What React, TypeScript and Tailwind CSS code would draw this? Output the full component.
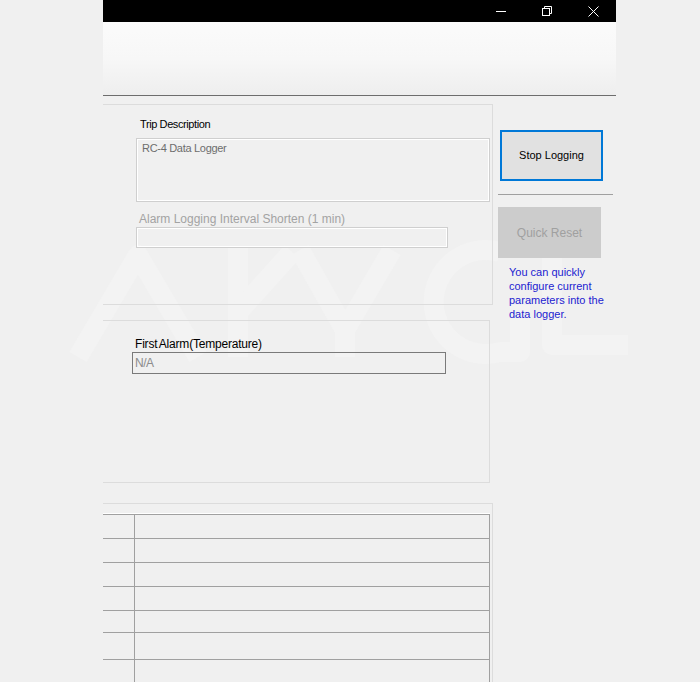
import React from "react";

const rows = [24, 24, 24, 24, 22, 27, 30];

function Watermark() {
  return (
    <svg
      className="pointer-events-none absolute left-0 top-0"
      width="700"
      height="682"
      viewBox="0 0 700 682"
    >
      <g fill="none" stroke="#f3f3f3" strokeWidth="20" strokeLinejoin="round">
        <path d="M78 357 L138 255 L198 357" />
        <path d="M238 248 L238 357" />
        <path d="M238 312 L292 252" />
        <path d="M300 250 L345 330 L392 250" />
        <path d="M345 330 L345 357" />
        <path d="M500 252 A52 52 0 1 0 500 352 L520 352 L520 305" />
        <path d="M552 240 L552 345 L628 345" />
      </g>
    </svg>
  );
}

export default function App() {
  const font = { fontFamily: '"Liberation Sans", Arial, sans-serif' };
  return (
    <div
      className="relative flex h-[682px] w-[700px] items-start overflow-hidden bg-[#f0f0f0]"
      style={font}
    >
      <Watermark />
      <div className="w-[103px] shrink-0" />
      <div className="relative flex w-[513px] shrink-0 flex-col">
        {/* title bar */}
        <div className="flex h-[22px] shrink-0 justify-end bg-black">
          <div className="flex w-[46px] items-center justify-center">
            <svg width="10" height="10" viewBox="0 0 10 10">
              <path d="M0 5.5 H10" stroke="#fff" strokeWidth="1" />
            </svg>
          </div>
          <div className="flex w-[46px] items-center justify-center">
            <svg width="10" height="10" viewBox="0 0 10 10">
              <rect x="0.5" y="2.5" width="7" height="7" fill="none" stroke="#fff" />
              <path d="M2.5 2.5 V0.5 H9.5 V7.5 H7.5" fill="none" stroke="#fff" />
            </svg>
          </div>
          <div className="flex w-[46px] items-center justify-center">
            <svg width="11" height="11" viewBox="0 0 11 11">
              <path d="M0.5 0.5 L10.5 10.5 M10.5 0.5 L0.5 10.5" stroke="#fff" strokeWidth="1" />
            </svg>
          </div>
        </div>
        {/* header */}
        <div className="h-[74px] shrink-0 border-b border-[#6d6d6d] bg-linear-to-b from-[#fbfbfb] via-[#f7f7f7] to-[#eeeeee]" />
        {/* body */}
        <div className="flex shrink-0 items-start">
          <div className="flex w-[390px] shrink-0 flex-col">
            {/* group 1 */}
            <div className="mt-[8px] flex h-[201px] shrink-0 flex-col border-y border-r border-[#dcdcdc] pl-[33px] pt-[13px]">
              <div className="ml-[4px] text-[11px] leading-[13px] tracking-[-0.4px] text-black">
                Trip Description
              </div>
              <div className="mt-[7px] h-[64px] w-[354px] shrink-0 border border-[#cfcfcf] px-[5px] pt-[3px] text-[11px] leading-[13px] tracking-[-0.3px] text-[#6d6d6d] shadow-[inset_0_0_0_1px_#ffffff]">
                RC-4 Data Logger
              </div>
              <div className="ml-[3px] mt-[10px] text-[12px] leading-[14px] text-[#a3a3a3]">
                Alarm Logging Interval Shorten (1 min)
              </div>
              <div className="mt-[1px] h-[21px] w-[312px] shrink-0 border border-[#cfcfcf] shadow-[inset_0_0_0_1px_#ffffff]" />
            </div>
            {/* group 2 */}
            <div className="mt-[15px] flex h-[163px] w-[387px] shrink-0 flex-col border-y border-r border-[#dcdcdc] pl-[29px] pt-[16px]">
              <div className="ml-[3px] text-[12px] leading-[14px] tracking-[-0.2px] text-black [word-spacing:-1px]">
                First Alarm(Temperature)
              </div>
              <div className="mt-[1px] flex h-[22px] w-[314px] shrink-0 items-center border border-[#7a7a7a] px-[2px] text-[12px] tracking-[-0.5px] text-[#8c8c8c]">
                N/A
              </div>
            </div>
            {/* group 3 */}
            <div className="mt-[20px] flex shrink-0 flex-col border-r border-t border-[#dcdcdc] pt-[9px]">
              <div className="w-[387px] border-t border-white">
                {rows.map((h, i) => (
                  <div
                    key={i}
                    className="flex border-t border-[#a0a0a0]"
                    style={{ height: h }}
                  >
                    <div className="w-[31px] shrink-0" />
                    <div className="flex-1 border-x border-[#a0a0a0]" />
                  </div>
                ))}
              </div>
            </div>
          </div>
          {/* right column */}
          <div className="flex flex-1 flex-col pt-[34px]">
            <div className="ml-[7px] flex h-[51px] w-[103px] shrink-0 items-center justify-center border-2 border-[#0078d7] bg-[#e1e1e1] text-[11px] text-black">
              Stop Logging
            </div>
            <div className="ml-[5px] mt-[13px] h-px w-[115px] shrink-0 bg-[#a0a0a0]" />
            <div className="ml-[5px] mt-[12px] flex h-[51px] w-[103px] shrink-0 items-center justify-center bg-[#cccccc] text-[12px] text-[#a0a0a0]">
              Quick Reset
            </div>
            <div className="ml-[16px] mt-[7px] text-[11px] leading-[14px] text-[#2222d0]">
              You can quickly
              <br />
              configure current
              <br />
              parameters into the
              <br />
              data logger.
            </div>
          </div>
        </div>
      </div>
    </div>
  );
}
